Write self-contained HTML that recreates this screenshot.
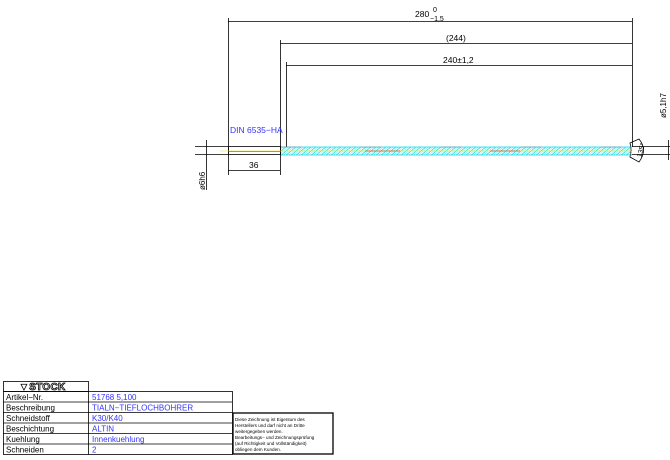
<!DOCTYPE html>
<html><head><style>
body{margin:0;background:#fff;width:670px;height:460px;overflow:hidden;font-family:"Liberation Sans",sans-serif}
svg{position:absolute;left:0;top:0}
</style></head><body>
<svg width="670" height="460" viewBox="0 0 670 460" font-family="Liberation Sans, sans-serif">
<defs>
<pattern id="h" width="5" height="8" patternUnits="userSpaceOnUse" patternTransform="skewX(-50)">
<line x1="1" y1="0" x2="1" y2="8" stroke="#00d8e8" stroke-width="1.1"/>
<line x1="3.5" y1="0" x2="3.5" y2="8" stroke="#40e8f0" stroke-width="0.6"/>
</pattern>
</defs>
<g stroke="#000" stroke-width="0.8" fill="none">
<line x1="228.5" y1="18" x2="228.5" y2="175"/>
<line x1="632.5" y1="18" x2="632.5" y2="147"/>
<line x1="280.5" y1="40" x2="280.5" y2="175"/>
<line x1="286.5" y1="62" x2="286.5" y2="147"/>
<line x1="228" y1="21.5" x2="632" y2="21.5"/>
<line x1="280" y1="43.5" x2="632" y2="43.5"/>
<line x1="286" y1="65.5" x2="632" y2="65.5"/>
<line x1="228" y1="170.5" x2="280" y2="170.5"/>
<rect x="228.5" y="146.5" width="52" height="8"/>
<line x1="228" y1="151.5" x2="280" y2="151.5" stroke-width="0.5"/>
<line x1="195" y1="146.5" x2="228" y2="146.5"/>
<line x1="195" y1="154.5" x2="228" y2="154.5"/>
<line x1="632" y1="146.5" x2="670" y2="146.5"/>
<line x1="632" y1="154.5" x2="670" y2="154.5"/>
<line x1="206.5" y1="140" x2="206.5" y2="190"/>
<line x1="668.5" y1="140" x2="668.5" y2="160"/>
<path d="M630 143 Q632 150 630 157 L639 162 Q648 150 639 139 Z"/>
</g>
<rect x="281" y="147" width="351" height="8" fill="url(#h)"/>
<line x1="281" y1="147" x2="632" y2="147" stroke="#00d8e8" stroke-width="0.8"/>
<line x1="281" y1="155" x2="632" y2="155" stroke="#00d8e8" stroke-width="0.8"/>
<line x1="220" y1="151" x2="632" y2="151" stroke="#ffe000" stroke-width="0.6"/>
<line x1="365" y1="151" x2="400" y2="151" stroke="#e00" stroke-width="0.6"/>
<line x1="490" y1="151" x2="520" y2="151" stroke="#e00" stroke-width="0.6"/>
<line x1="281" y1="147" x2="632" y2="147" stroke="#e04040" stroke-width="0.3" stroke-dasharray="20 60"/>
<g font-size="8.5" fill="#000">
<text x="415" y="17">280</text>
<text x="433" y="12" font-size="7">0</text>
<text x="430" y="21" font-size="7">−1,5</text>
<text x="446" y="41">(244)</text>
<text x="443" y="63">240±1,2</text>
<text x="249" y="168">36</text>
<text x="637" y="158" font-size="7" transform="rotate(-75 639 155)">135°</text>
<text transform="translate(205,190) rotate(-90)" font-size="8">ø6h6</text>
<text transform="translate(666,118) rotate(-90)" font-size="8">ø5,1h7</text>
</g>
<text x="230" y="133" font-size="8.5" fill="#33f">DIN 6535−HA</text>
<g stroke="#000" stroke-width="0.8" fill="none">
<rect x="3.5" y="381.5" width="85" height="10"/>
<rect x="3.5" y="391.5" width="229" height="63"/>
<line x1="88.5" y1="391.5" x2="88.5" y2="454.5"/>
<line x1="3" y1="402" x2="232" y2="402"/>
<line x1="3" y1="412.5" x2="232" y2="412.5"/>
<line x1="3" y1="423" x2="232" y2="423"/>
<line x1="3" y1="433.5" x2="232" y2="433.5"/>
<line x1="3" y1="444" x2="232" y2="444"/>
<rect x="233" y="413" width="100" height="41" stroke-width="1.3"/>
</g>
<text x="19" y="390" font-size="10" font-weight="bold" fill="#fff" stroke="#000" stroke-width="0.8" letter-spacing="0.3">▼STOCK</text>
<g font-size="8" fill="#000">
<text x="6" y="400">Artikel−Nr.</text>
<text x="6" y="410.5">Beschreibung</text>
<text x="6" y="421">Schneidstoff</text>
<text x="6" y="431.5">Beschichtung</text>
<text x="6" y="442">Kuehlung</text>
<text x="6" y="452.5">Schneiden</text>
</g>
<g font-size="8" fill="#33f">
<text x="92" y="400">51768 5,100</text>
<text x="92" y="410.5">TIALN−TIEFLOCHBOHRER</text>
<text x="92" y="421">K30/K40</text>
<text x="92" y="431.5">ALTIN</text>
<text x="92" y="442">Innenkuehlung</text>
<text x="92" y="452.5">2</text>
</g>
<g font-size="4.6" fill="#000">
<text x="235" y="421">Diese Zeichnung ist Eigentum des</text>
<text x="235" y="427">Herstellers und darf nicht an Dritte</text>
<text x="235" y="433">weitergegeben werden.</text>
<text x="235" y="439">Bearbeitungs− und Zeichnungsprüfung</text>
<text x="235" y="445">(auf Richtigkeit und Vollständigkeit)</text>
<text x="235" y="451">obliegen dem Kunden.</text>
</g>
</svg>
</body></html>
